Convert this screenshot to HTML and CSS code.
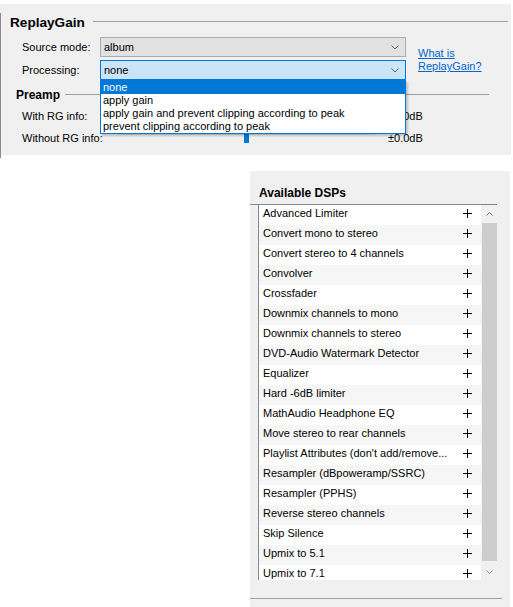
FILE: index.html
```html
<!DOCTYPE html>
<html lang="en">
<head>
    <meta charset="UTF-8">
    <title>ReplayGain / DSP Manager</title>
    <link rel="stylesheet" href="styles.css">
</head>
<body>
    <div class="rg-panel">
        <div class="rg-frame">
            <div class="group-title rg-title">
                <span>ReplayGain</span>
                <i class="rule"></i>
            </div>

            <div class="rg-form">
                <div class="fields">
                    <div class="field">
                        <label>Source mode:</label>
                        <div class="combo">
                            <span>album</span>
                            <svg class="chevron" width="8" height="5" viewBox="0 0 8 5"><polyline points="0.5,0.5 4,4 7.5,0.5" fill="none" stroke="#606060"/></svg>
                        </div>
                    </div>
                    <div class="field">
                        <label>Processing:</label>
                        <div class="combo focused">
                            <span>none</span>
                            <svg class="chevron" width="8" height="5" viewBox="0 0 8 5"><polyline points="0.5,0.5 4,4 7.5,0.5" fill="none" stroke="#606060"/></svg>
                            <ul class="dropdown">
                                <li class="selected">none</li>
                                <li>apply gain</li>
                                <li>apply gain and prevent clipping according to peak</li>
                                <li>prevent clipping according to peak</li>
                            </ul>
                        </div>
                    </div>
                </div>
                <a class="help-link" href="#">What is<br>ReplayGain?</a>
            </div>

            <div class="group-title preamp-title">
                <span>Preamp</span>
                <i class="rule"></i>
            </div>

            <div class="slider-row">
                <label>With RG info:</label>
                <div class="slider">
                    <div class="track"></div>
                    <div class="thumb" style="left: calc(50% - 3px);"></div>
                </div>
                <span class="value">±0.0dB</span>
            </div>
            <div class="slider-row">
                <label>Without RG info:</label>
                <div class="slider">
                    <div class="track"></div>
                    <div class="thumb" style="left: calc(50% - 3px);"></div>
                </div>
                <span class="value">±0.0dB</span>
            </div>
        </div>
    </div>

    <div class="dsp-panel">
        <h2>Available DSPs</h2>
        <div class="dsp-wrap">
            <div class="dsp-list">
                <ul class="rows">
                    <li><span>Advanced Limiter</span><svg class="plus" width="9" height="9" viewBox="0 0 9 9"><path d="M4.5 0v9M0 4.5h9" stroke="#000"/></svg></li>
                    <li><span>Convert mono to stereo</span><svg class="plus" width="9" height="9" viewBox="0 0 9 9"><path d="M4.5 0v9M0 4.5h9" stroke="#000"/></svg></li>
                    <li><span>Convert stereo to 4 channels</span><svg class="plus" width="9" height="9" viewBox="0 0 9 9"><path d="M4.5 0v9M0 4.5h9" stroke="#000"/></svg></li>
                    <li><span>Convolver</span><svg class="plus" width="9" height="9" viewBox="0 0 9 9"><path d="M4.5 0v9M0 4.5h9" stroke="#000"/></svg></li>
                    <li><span>Crossfader</span><svg class="plus" width="9" height="9" viewBox="0 0 9 9"><path d="M4.5 0v9M0 4.5h9" stroke="#000"/></svg></li>
                    <li><span>Downmix channels to mono</span><svg class="plus" width="9" height="9" viewBox="0 0 9 9"><path d="M4.5 0v9M0 4.5h9" stroke="#000"/></svg></li>
                    <li><span>Downmix channels to stereo</span><svg class="plus" width="9" height="9" viewBox="0 0 9 9"><path d="M4.5 0v9M0 4.5h9" stroke="#000"/></svg></li>
                    <li><span>DVD-Audio Watermark Detector</span><svg class="plus" width="9" height="9" viewBox="0 0 9 9"><path d="M4.5 0v9M0 4.5h9" stroke="#000"/></svg></li>
                    <li><span>Equalizer</span><svg class="plus" width="9" height="9" viewBox="0 0 9 9"><path d="M4.5 0v9M0 4.5h9" stroke="#000"/></svg></li>
                    <li><span>Hard -6dB limiter</span><svg class="plus" width="9" height="9" viewBox="0 0 9 9"><path d="M4.5 0v9M0 4.5h9" stroke="#000"/></svg></li>
                    <li><span>MathAudio Headphone EQ</span><svg class="plus" width="9" height="9" viewBox="0 0 9 9"><path d="M4.5 0v9M0 4.5h9" stroke="#000"/></svg></li>
                    <li><span>Move stereo to rear channels</span><svg class="plus" width="9" height="9" viewBox="0 0 9 9"><path d="M4.5 0v9M0 4.5h9" stroke="#000"/></svg></li>
                    <li><span>Playlist Attributes (don't add/remove...</span><svg class="plus" width="9" height="9" viewBox="0 0 9 9"><path d="M4.5 0v9M0 4.5h9" stroke="#000"/></svg></li>
                    <li><span>Resampler (dBpoweramp/SSRC)</span><svg class="plus" width="9" height="9" viewBox="0 0 9 9"><path d="M4.5 0v9M0 4.5h9" stroke="#000"/></svg></li>
                    <li><span>Resampler (PPHS)</span><svg class="plus" width="9" height="9" viewBox="0 0 9 9"><path d="M4.5 0v9M0 4.5h9" stroke="#000"/></svg></li>
                    <li><span>Reverse stereo channels</span><svg class="plus" width="9" height="9" viewBox="0 0 9 9"><path d="M4.5 0v9M0 4.5h9" stroke="#000"/></svg></li>
                    <li><span>Skip Silence</span><svg class="plus" width="9" height="9" viewBox="0 0 9 9"><path d="M4.5 0v9M0 4.5h9" stroke="#000"/></svg></li>
                    <li><span>Upmix to 5.1</span><svg class="plus" width="9" height="9" viewBox="0 0 9 9"><path d="M4.5 0v9M0 4.5h9" stroke="#000"/></svg></li>
                    <li><span>Upmix to 7.1</span><svg class="plus" width="9" height="9" viewBox="0 0 9 9"><path d="M4.5 0v9M0 4.5h9" stroke="#000"/></svg></li>
                </ul>
                <div class="scrollbar">
                    <div class="arrow"><svg width="7" height="4" viewBox="0 0 7 4"><polyline points="0.5,3.5 3.5,0.5 6.5,3.5" fill="none" stroke="#707070"/></svg></div>
                    <div class="sb-thumb"></div>
                    <div class="sb-space"></div>
                    <div class="arrow"><svg width="7" height="4" viewBox="0 0 7 4"><polyline points="0.5,0.5 3.5,3.5 6.5,0.5" fill="none" stroke="#909090"/></svg></div>
                </div>
            </div>
        </div>
        <div class="bottom-rule"></div>
    </div>
</body>
</html>
```

FILE: styles.css
```css
* {
    margin: 0;
    padding: 0;
    box-sizing: border-box;
}

body {
    background: #fff;
    color: #000;
    font-family: 'Liberation Sans', Arial, sans-serif;
    font-size: 11px;
}

ul {
    list-style: none;
}

/* ---- ReplayGain page ---- */

.rg-panel {
    margin-top: 4px;
    width: 511px;
    height: 151px;
    padding-top: 6px;
    background: #f0f0f0;
}

.rg-frame {
    height: 145px;
    padding-left: 9px;
    border-left: 1px solid #8c8c8c;
}

.group-title {
    display: flex;
    align-items: center;
    font-weight: bold;
}

.group-title .rule {
    flex: 1;
    height: 1px;
    margin-top: -1px;
    background: #a0a0a0;
}

.rg-title {
    margin-top: 3px;
    height: 18px;
    font-size: 13.6px;
}

.rg-title .rule {
    margin-left: 8px;
    margin-right: 3px;
}

.preamp-title {
    margin: 8px 0 0 6px;
    height: 14px;
    font-size: 12px;
}

.preamp-title .rule {
    margin-left: 5px;
    margin-right: 22px;
}

.rg-form {
    display: flex;
    margin-top: 6px;
}

.fields {
    display: flex;
    flex-direction: column;
    gap: 3px;
    padding-left: 12px;
}

.field {
    display: flex;
    height: 20px;
    line-height: 20px;
}

.field label {
    width: 78px;
}

.combo {
    position: relative;
    display: flex;
    justify-content: space-between;
    align-items: center;
    width: 306px;
    height: 20px;
    padding: 0 6px 0 3px;
    background: #e1e1e1;
    border: 1px solid #adadad;
}

.combo.focused {
    background: #cce4f7;
    border-color: #0078d7;
}

.chevron {
    display: block;
}

.dropdown {
    position: absolute;
    top: 19px;
    left: -1px;
    width: 306px;
    height: 54px;
    background: #fff;
    border: 1px solid #0078d7;
    box-shadow: 2px 2px 2px rgba(0, 0, 0, 0.2);
    line-height: 13px;
    z-index: 5;
}

.dropdown li {
    height: 13px;
    padding-left: 2px;
    white-space: nowrap;
}

.dropdown li.selected {
    background: #0078d7;
    color: #fff;
}

.help-link {
    margin: 10px 0 0 12px;
    line-height: 13px;
    color: #0066cc;
}

.slider-row {
    display: flex;
    height: 22px;
    line-height: 22px;
    padding-left: 12px;
}

.preamp-title + .slider-row {
    margin-top: 3px;
}

.slider-row label {
    width: 96px;
}

.slider {
    position: relative;
    width: 257px;
}

.slider .track {
    margin-top: 4px;
    height: 4px;
    background: #e7eaea;
    border: 1px solid #d6d6d6;
}

.slider .thumb {
    position: absolute;
    top: 0;
    width: 5px;
    height: 16px;
    background: #0078d7;
}

.value {
    margin-left: 13px;
}

/* ---- DSP list ---- */

.dsp-panel {
    margin: 16px 0 0 250px;
    width: 260px;
    height: 436px;
    padding-top: 15px;
    background: #f0f0f0;
}

.dsp-panel h2 {
    height: 14px;
    line-height: 14px;
    margin: 0 0 4px 9px;
    font-size: 12px;
}

.dsp-wrap {
    width: 247px;
    border-top: 1px solid #828790;
}

.dsp-list {
    display: flex;
    margin-left: 8px;
    height: 375px;
    overflow: hidden;
    border-left: 1px solid #828790;
}

.rows {
    width: 222px;
    background: #fff;
}

.rows li {
    display: flex;
    justify-content: space-between;
    align-items: center;
    height: 20px;
    line-height: 16px;
    padding: 0 9px 4px 4px;
    white-space: nowrap;
}

.rows li:nth-child(even) {
    background: #f6f6f6;
}

.plus {
    display: block;
}

.scrollbar {
    display: flex;
    flex-direction: column;
    width: 16px;
    background: #f0f0f0;
}

.scrollbar .arrow {
    display: flex;
    justify-content: center;
    align-items: center;
    height: 17px;
}

.sb-thumb {
    margin: 1px 0 0 1px;
    height: 338px;
    background: #cdcdcd;
}

.sb-space {
    flex: 1;
}

.bottom-rule {
    margin-top: 18px;
    width: 252px;
    height: 1px;
    background: #a0a0a0;
}
```
